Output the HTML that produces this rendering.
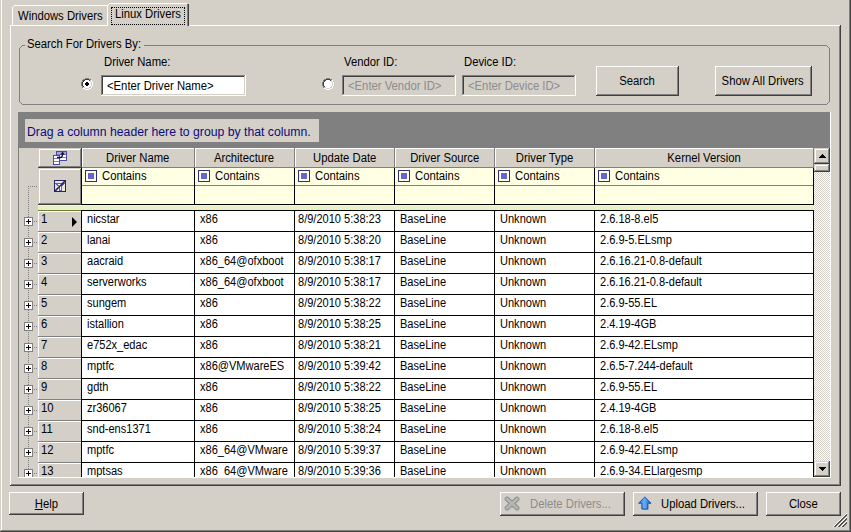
<!DOCTYPE html>
<html><head><meta charset="utf-8">
<style>
*{margin:0;padding:0;box-sizing:border-box}
html,body{width:851px;height:532px;overflow:hidden;background:#D4D0C8;font-family:"Liberation Sans",sans-serif;font-size:11px;color:#000;position:relative}
.a{position:absolute}
.t{position:absolute;white-space:nowrap;line-height:13px;font-size:12px}
.s{display:inline-block;transform:scaleX(0.94);transform-origin:0 0}
.s.c{transform-origin:50% 0}
.s.d{transform:scaleX(0.92)}
</style></head><body>
<div class="a" style="left:1px;top:0px;width:1px;height:531px;background:#fff;"></div><div class="a" style="left:849px;top:0px;width:1px;height:531px;background:#808080;"></div><div class="a" style="left:850px;top:0px;width:1px;height:532px;background:#404040;"></div><div class="a" style="left:1px;top:530px;width:849px;height:1px;background:#808080;"></div><div class="a" style="left:0px;top:531px;width:851px;height:1px;background:#404040;"></div><div class="a" style="left:12px;top:7px;width:1px;height:18px;background:#fff;"></div><div class="a" style="left:13px;top:6px;width:1px;height:1px;background:#fff;"></div><div class="a" style="left:14px;top:5px;width:93px;height:1px;background:#fff;"></div><div class="t" style="left:18px;top:10px;"><span class="s">Windows Drivers</span></div><div class="a" style="left:107px;top:5px;width:1px;height:21px;background:#fff;"></div><div class="a" style="left:108px;top:4px;width:1px;height:1px;background:#fff;"></div><div class="a" style="left:109px;top:3px;width:78px;height:1px;background:#fff;"></div><div class="a" style="left:187px;top:4px;width:1px;height:22px;background:#808080;"></div><div class="a" style="left:188px;top:4px;width:1px;height:22px;background:#404040;"></div><div class="t" style="left:115px;top:8px;"><span class="s">Linux Drivers</span></div><div class="a" style="left:111px;top:7px;width:74px;height:18px;border:1px dotted #000"></div><div class="a" style="left:10px;top:25px;width:97px;height:1px;background:#fff;"></div><div class="a" style="left:189px;top:25px;width:651px;height:1px;background:#fff;"></div><div class="a" style="left:10px;top:25px;width:1px;height:460px;background:#fff;"></div><div class="a" style="left:839px;top:26px;width:1px;height:459px;background:#808080;"></div><div class="a" style="left:840px;top:25px;width:1px;height:461px;background:#404040;"></div><div class="a" style="left:11px;top:484px;width:829px;height:1px;background:#808080;"></div><div class="a" style="left:10px;top:485px;width:831px;height:1px;background:#404040;"></div><svg class="a" style="left:0;top:0" width="851" height="532" shape-rendering="crispEdges"><g fill="#808080"><rect x="22" y="45" width="3" height="1"/><rect x="144" y="45" width="683" height="1"/><rect x="21" y="46" width="1" height="1"/><rect x="20" y="47" width="1" height="1"/><rect x="19" y="48" width="1" height="54"/><rect x="20" y="102" width="1" height="1"/><rect x="21" y="103" width="1" height="1"/><rect x="22" y="104" width="805" height="1"/><rect x="827" y="46" width="1" height="1"/><rect x="828" y="47" width="1" height="1"/><rect x="829" y="48" width="1" height="54"/><rect x="828" y="102" width="1" height="1"/><rect x="827" y="103" width="1" height="1"/></g></svg><div class="t" style="left:27px;top:38px;"><span class="s">Search For Drivers By:</span></div><div class="t" style="left:104px;top:56px;"><span class="s">Driver Name:</span></div><div class="t" style="left:344px;top:56px;"><span class="s">Vendor ID:</span></div><div class="t" style="left:464px;top:56px;"><span class="s">Device ID:</span></div><svg class="a" style="left:81px;top:78px" width="12" height="12" shape-rendering="crispEdges"><rect x="4" y="0" width="1" height="1" fill="#808080"/><rect x="5" y="0" width="1" height="1" fill="#808080"/><rect x="6" y="0" width="1" height="1" fill="#808080"/><rect x="7" y="0" width="1" height="1" fill="#808080"/><rect x="2" y="1" width="1" height="1" fill="#808080"/><rect x="3" y="1" width="1" height="1" fill="#808080"/><rect x="4" y="1" width="1" height="1" fill="#404040"/><rect x="5" y="1" width="1" height="1" fill="#404040"/><rect x="6" y="1" width="1" height="1" fill="#404040"/><rect x="7" y="1" width="1" height="1" fill="#404040"/><rect x="8" y="1" width="1" height="1" fill="#808080"/><rect x="9" y="1" width="1" height="1" fill="#808080"/><rect x="1" y="2" width="1" height="1" fill="#808080"/><rect x="2" y="2" width="1" height="1" fill="#404040"/><rect x="3" y="2" width="1" height="1" fill="#404040"/><rect x="4" y="2" width="1" height="1" fill="#fff"/><rect x="5" y="2" width="1" height="1" fill="#fff"/><rect x="6" y="2" width="1" height="1" fill="#fff"/><rect x="7" y="2" width="1" height="1" fill="#fff"/><rect x="8" y="2" width="1" height="1" fill="#404040"/><rect x="9" y="2" width="1" height="1" fill="#D4D0C8"/><rect x="10" y="2" width="1" height="1" fill="#fff"/><rect x="1" y="3" width="1" height="1" fill="#808080"/><rect x="2" y="3" width="1" height="1" fill="#404040"/><rect x="3" y="3" width="1" height="1" fill="#fff"/><rect x="4" y="3" width="1" height="1" fill="#fff"/><rect x="5" y="3" width="1" height="1" fill="#fff"/><rect x="6" y="3" width="1" height="1" fill="#fff"/><rect x="7" y="3" width="1" height="1" fill="#fff"/><rect x="8" y="3" width="1" height="1" fill="#fff"/><rect x="9" y="3" width="1" height="1" fill="#D4D0C8"/><rect x="10" y="3" width="1" height="1" fill="#fff"/><rect x="0" y="4" width="1" height="1" fill="#808080"/><rect x="1" y="4" width="1" height="1" fill="#404040"/><rect x="2" y="4" width="1" height="1" fill="#fff"/><rect x="3" y="4" width="1" height="1" fill="#fff"/><rect x="4" y="4" width="1" height="1" fill="#fff"/><rect x="5" y="4" width="1" height="1" fill="#000"/><rect x="6" y="4" width="1" height="1" fill="#000"/><rect x="7" y="4" width="1" height="1" fill="#fff"/><rect x="8" y="4" width="1" height="1" fill="#fff"/><rect x="9" y="4" width="1" height="1" fill="#fff"/><rect x="10" y="4" width="1" height="1" fill="#D4D0C8"/><rect x="11" y="4" width="1" height="1" fill="#fff"/><rect x="0" y="5" width="1" height="1" fill="#808080"/><rect x="1" y="5" width="1" height="1" fill="#404040"/><rect x="2" y="5" width="1" height="1" fill="#fff"/><rect x="3" y="5" width="1" height="1" fill="#fff"/><rect x="4" y="5" width="1" height="1" fill="#000"/><rect x="5" y="5" width="1" height="1" fill="#000"/><rect x="6" y="5" width="1" height="1" fill="#000"/><rect x="7" y="5" width="1" height="1" fill="#000"/><rect x="8" y="5" width="1" height="1" fill="#fff"/><rect x="9" y="5" width="1" height="1" fill="#fff"/><rect x="10" y="5" width="1" height="1" fill="#D4D0C8"/><rect x="11" y="5" width="1" height="1" fill="#fff"/><rect x="0" y="6" width="1" height="1" fill="#808080"/><rect x="1" y="6" width="1" height="1" fill="#404040"/><rect x="2" y="6" width="1" height="1" fill="#fff"/><rect x="3" y="6" width="1" height="1" fill="#fff"/><rect x="4" y="6" width="1" height="1" fill="#000"/><rect x="5" y="6" width="1" height="1" fill="#000"/><rect x="6" y="6" width="1" height="1" fill="#000"/><rect x="7" y="6" width="1" height="1" fill="#000"/><rect x="8" y="6" width="1" height="1" fill="#fff"/><rect x="9" y="6" width="1" height="1" fill="#fff"/><rect x="10" y="6" width="1" height="1" fill="#D4D0C8"/><rect x="11" y="6" width="1" height="1" fill="#fff"/><rect x="0" y="7" width="1" height="1" fill="#808080"/><rect x="1" y="7" width="1" height="1" fill="#404040"/><rect x="2" y="7" width="1" height="1" fill="#fff"/><rect x="3" y="7" width="1" height="1" fill="#fff"/><rect x="4" y="7" width="1" height="1" fill="#fff"/><rect x="5" y="7" width="1" height="1" fill="#000"/><rect x="6" y="7" width="1" height="1" fill="#000"/><rect x="7" y="7" width="1" height="1" fill="#fff"/><rect x="8" y="7" width="1" height="1" fill="#fff"/><rect x="9" y="7" width="1" height="1" fill="#fff"/><rect x="10" y="7" width="1" height="1" fill="#D4D0C8"/><rect x="11" y="7" width="1" height="1" fill="#fff"/><rect x="1" y="8" width="1" height="1" fill="#808080"/><rect x="2" y="8" width="1" height="1" fill="#404040"/><rect x="3" y="8" width="1" height="1" fill="#fff"/><rect x="4" y="8" width="1" height="1" fill="#fff"/><rect x="5" y="8" width="1" height="1" fill="#fff"/><rect x="6" y="8" width="1" height="1" fill="#fff"/><rect x="7" y="8" width="1" height="1" fill="#fff"/><rect x="8" y="8" width="1" height="1" fill="#fff"/><rect x="9" y="8" width="1" height="1" fill="#D4D0C8"/><rect x="10" y="8" width="1" height="1" fill="#fff"/><rect x="1" y="9" width="1" height="1" fill="#808080"/><rect x="2" y="9" width="1" height="1" fill="#D4D0C8"/><rect x="3" y="9" width="1" height="1" fill="#D4D0C8"/><rect x="4" y="9" width="1" height="1" fill="#fff"/><rect x="5" y="9" width="1" height="1" fill="#fff"/><rect x="6" y="9" width="1" height="1" fill="#fff"/><rect x="7" y="9" width="1" height="1" fill="#fff"/><rect x="8" y="9" width="1" height="1" fill="#D4D0C8"/><rect x="9" y="9" width="1" height="1" fill="#D4D0C8"/><rect x="10" y="9" width="1" height="1" fill="#fff"/><rect x="2" y="10" width="1" height="1" fill="#fff"/><rect x="3" y="10" width="1" height="1" fill="#fff"/><rect x="4" y="10" width="1" height="1" fill="#D4D0C8"/><rect x="5" y="10" width="1" height="1" fill="#D4D0C8"/><rect x="6" y="10" width="1" height="1" fill="#D4D0C8"/><rect x="7" y="10" width="1" height="1" fill="#D4D0C8"/><rect x="8" y="10" width="1" height="1" fill="#fff"/><rect x="9" y="10" width="1" height="1" fill="#fff"/><rect x="4" y="11" width="1" height="1" fill="#fff"/><rect x="5" y="11" width="1" height="1" fill="#fff"/><rect x="6" y="11" width="1" height="1" fill="#fff"/><rect x="7" y="11" width="1" height="1" fill="#fff"/></svg><svg class="a" style="left:322px;top:78px" width="12" height="12" shape-rendering="crispEdges"><rect x="4" y="0" width="1" height="1" fill="#808080"/><rect x="5" y="0" width="1" height="1" fill="#808080"/><rect x="6" y="0" width="1" height="1" fill="#808080"/><rect x="7" y="0" width="1" height="1" fill="#808080"/><rect x="2" y="1" width="1" height="1" fill="#808080"/><rect x="3" y="1" width="1" height="1" fill="#808080"/><rect x="4" y="1" width="1" height="1" fill="#404040"/><rect x="5" y="1" width="1" height="1" fill="#404040"/><rect x="6" y="1" width="1" height="1" fill="#404040"/><rect x="7" y="1" width="1" height="1" fill="#404040"/><rect x="8" y="1" width="1" height="1" fill="#808080"/><rect x="9" y="1" width="1" height="1" fill="#808080"/><rect x="1" y="2" width="1" height="1" fill="#808080"/><rect x="2" y="2" width="1" height="1" fill="#404040"/><rect x="3" y="2" width="1" height="1" fill="#404040"/><rect x="4" y="2" width="1" height="1" fill="#fff"/><rect x="5" y="2" width="1" height="1" fill="#fff"/><rect x="6" y="2" width="1" height="1" fill="#fff"/><rect x="7" y="2" width="1" height="1" fill="#fff"/><rect x="8" y="2" width="1" height="1" fill="#404040"/><rect x="9" y="2" width="1" height="1" fill="#D4D0C8"/><rect x="10" y="2" width="1" height="1" fill="#fff"/><rect x="1" y="3" width="1" height="1" fill="#808080"/><rect x="2" y="3" width="1" height="1" fill="#404040"/><rect x="3" y="3" width="1" height="1" fill="#fff"/><rect x="4" y="3" width="1" height="1" fill="#fff"/><rect x="5" y="3" width="1" height="1" fill="#fff"/><rect x="6" y="3" width="1" height="1" fill="#fff"/><rect x="7" y="3" width="1" height="1" fill="#fff"/><rect x="8" y="3" width="1" height="1" fill="#fff"/><rect x="9" y="3" width="1" height="1" fill="#D4D0C8"/><rect x="10" y="3" width="1" height="1" fill="#fff"/><rect x="0" y="4" width="1" height="1" fill="#808080"/><rect x="1" y="4" width="1" height="1" fill="#404040"/><rect x="2" y="4" width="1" height="1" fill="#fff"/><rect x="3" y="4" width="1" height="1" fill="#fff"/><rect x="4" y="4" width="1" height="1" fill="#fff"/><rect x="5" y="4" width="1" height="1" fill="#fff"/><rect x="6" y="4" width="1" height="1" fill="#fff"/><rect x="7" y="4" width="1" height="1" fill="#fff"/><rect x="8" y="4" width="1" height="1" fill="#fff"/><rect x="9" y="4" width="1" height="1" fill="#fff"/><rect x="10" y="4" width="1" height="1" fill="#D4D0C8"/><rect x="11" y="4" width="1" height="1" fill="#fff"/><rect x="0" y="5" width="1" height="1" fill="#808080"/><rect x="1" y="5" width="1" height="1" fill="#404040"/><rect x="2" y="5" width="1" height="1" fill="#fff"/><rect x="3" y="5" width="1" height="1" fill="#fff"/><rect x="4" y="5" width="1" height="1" fill="#fff"/><rect x="5" y="5" width="1" height="1" fill="#fff"/><rect x="6" y="5" width="1" height="1" fill="#fff"/><rect x="7" y="5" width="1" height="1" fill="#fff"/><rect x="8" y="5" width="1" height="1" fill="#fff"/><rect x="9" y="5" width="1" height="1" fill="#fff"/><rect x="10" y="5" width="1" height="1" fill="#D4D0C8"/><rect x="11" y="5" width="1" height="1" fill="#fff"/><rect x="0" y="6" width="1" height="1" fill="#808080"/><rect x="1" y="6" width="1" height="1" fill="#404040"/><rect x="2" y="6" width="1" height="1" fill="#fff"/><rect x="3" y="6" width="1" height="1" fill="#fff"/><rect x="4" y="6" width="1" height="1" fill="#fff"/><rect x="5" y="6" width="1" height="1" fill="#fff"/><rect x="6" y="6" width="1" height="1" fill="#fff"/><rect x="7" y="6" width="1" height="1" fill="#fff"/><rect x="8" y="6" width="1" height="1" fill="#fff"/><rect x="9" y="6" width="1" height="1" fill="#fff"/><rect x="10" y="6" width="1" height="1" fill="#D4D0C8"/><rect x="11" y="6" width="1" height="1" fill="#fff"/><rect x="0" y="7" width="1" height="1" fill="#808080"/><rect x="1" y="7" width="1" height="1" fill="#404040"/><rect x="2" y="7" width="1" height="1" fill="#fff"/><rect x="3" y="7" width="1" height="1" fill="#fff"/><rect x="4" y="7" width="1" height="1" fill="#fff"/><rect x="5" y="7" width="1" height="1" fill="#fff"/><rect x="6" y="7" width="1" height="1" fill="#fff"/><rect x="7" y="7" width="1" height="1" fill="#fff"/><rect x="8" y="7" width="1" height="1" fill="#fff"/><rect x="9" y="7" width="1" height="1" fill="#fff"/><rect x="10" y="7" width="1" height="1" fill="#D4D0C8"/><rect x="11" y="7" width="1" height="1" fill="#fff"/><rect x="1" y="8" width="1" height="1" fill="#808080"/><rect x="2" y="8" width="1" height="1" fill="#404040"/><rect x="3" y="8" width="1" height="1" fill="#fff"/><rect x="4" y="8" width="1" height="1" fill="#fff"/><rect x="5" y="8" width="1" height="1" fill="#fff"/><rect x="6" y="8" width="1" height="1" fill="#fff"/><rect x="7" y="8" width="1" height="1" fill="#fff"/><rect x="8" y="8" width="1" height="1" fill="#fff"/><rect x="9" y="8" width="1" height="1" fill="#D4D0C8"/><rect x="10" y="8" width="1" height="1" fill="#fff"/><rect x="1" y="9" width="1" height="1" fill="#808080"/><rect x="2" y="9" width="1" height="1" fill="#D4D0C8"/><rect x="3" y="9" width="1" height="1" fill="#D4D0C8"/><rect x="4" y="9" width="1" height="1" fill="#fff"/><rect x="5" y="9" width="1" height="1" fill="#fff"/><rect x="6" y="9" width="1" height="1" fill="#fff"/><rect x="7" y="9" width="1" height="1" fill="#fff"/><rect x="8" y="9" width="1" height="1" fill="#D4D0C8"/><rect x="9" y="9" width="1" height="1" fill="#D4D0C8"/><rect x="10" y="9" width="1" height="1" fill="#fff"/><rect x="2" y="10" width="1" height="1" fill="#fff"/><rect x="3" y="10" width="1" height="1" fill="#fff"/><rect x="4" y="10" width="1" height="1" fill="#D4D0C8"/><rect x="5" y="10" width="1" height="1" fill="#D4D0C8"/><rect x="6" y="10" width="1" height="1" fill="#D4D0C8"/><rect x="7" y="10" width="1" height="1" fill="#D4D0C8"/><rect x="8" y="10" width="1" height="1" fill="#fff"/><rect x="9" y="10" width="1" height="1" fill="#fff"/><rect x="4" y="11" width="1" height="1" fill="#fff"/><rect x="5" y="11" width="1" height="1" fill="#fff"/><rect x="6" y="11" width="1" height="1" fill="#fff"/><rect x="7" y="11" width="1" height="1" fill="#fff"/></svg><div class="a" style="left:101px;top:75px;width:145px;height:21px;background:#fff;"></div><div class="a" style="left:101px;top:75px;width:144px;height:1px;background:#808080;"></div><div class="a" style="left:101px;top:75px;width:1px;height:20px;background:#808080;"></div><div class="a" style="left:102px;top:76px;width:142px;height:1px;background:#404040;"></div><div class="a" style="left:102px;top:76px;width:1px;height:18px;background:#404040;"></div><div class="a" style="left:101px;top:95px;width:145px;height:1px;background:#fff;"></div><div class="a" style="left:245px;top:75px;width:1px;height:21px;background:#fff;"></div><div class="a" style="left:102px;top:94px;width:143px;height:1px;background:#D4D0C8;"></div><div class="a" style="left:244px;top:76px;width:1px;height:19px;background:#D4D0C8;"></div><div class="t" style="left:107px;top:80px;"><span class="s">&lt;Enter Driver Name&gt;</span></div><div class="a" style="left:342px;top:75px;width:114px;height:21px;background:#D4D0C8;"></div><div class="a" style="left:342px;top:75px;width:113px;height:1px;background:#808080;"></div><div class="a" style="left:342px;top:75px;width:1px;height:20px;background:#808080;"></div><div class="a" style="left:343px;top:76px;width:111px;height:1px;background:#404040;"></div><div class="a" style="left:343px;top:76px;width:1px;height:18px;background:#404040;"></div><div class="a" style="left:342px;top:95px;width:114px;height:1px;background:#fff;"></div><div class="a" style="left:455px;top:75px;width:1px;height:21px;background:#fff;"></div><div class="a" style="left:343px;top:94px;width:112px;height:1px;background:#D4D0C8;"></div><div class="a" style="left:454px;top:76px;width:1px;height:19px;background:#D4D0C8;"></div><div class="t" style="left:348px;top:80px;color:#8c8c8c"><span class="s">&lt;Enter Vendor ID&gt;</span></div><div class="a" style="left:462px;top:75px;width:114px;height:21px;background:#D4D0C8;"></div><div class="a" style="left:462px;top:75px;width:113px;height:1px;background:#808080;"></div><div class="a" style="left:462px;top:75px;width:1px;height:20px;background:#808080;"></div><div class="a" style="left:463px;top:76px;width:111px;height:1px;background:#404040;"></div><div class="a" style="left:463px;top:76px;width:1px;height:18px;background:#404040;"></div><div class="a" style="left:462px;top:95px;width:114px;height:1px;background:#fff;"></div><div class="a" style="left:575px;top:75px;width:1px;height:21px;background:#fff;"></div><div class="a" style="left:463px;top:94px;width:112px;height:1px;background:#D4D0C8;"></div><div class="a" style="left:574px;top:76px;width:1px;height:19px;background:#D4D0C8;"></div><div class="t" style="left:468px;top:80px;color:#8c8c8c"><span class="s">&lt;Enter Device ID&gt;</span></div><div class="a" style="left:596px;top:66px;width:83px;height:30px;background:#D4D0C8;"></div><div class="a" style="left:596px;top:66px;width:82px;height:1px;background:#fff;"></div><div class="a" style="left:596px;top:66px;width:1px;height:29px;background:#fff;"></div><div class="a" style="left:596px;top:95px;width:83px;height:1px;background:#404040;"></div><div class="a" style="left:678px;top:66px;width:1px;height:30px;background:#404040;"></div><div class="a" style="left:597px;top:94px;width:81px;height:1px;background:#808080;"></div><div class="a" style="left:677px;top:67px;width:1px;height:28px;background:#808080;"></div><div class="t" style="left:596px;top:75px;width:82px;text-align:center;"><span class="s c">Search</span></div><div class="a" style="left:715px;top:66px;width:97px;height:30px;background:#D4D0C8;"></div><div class="a" style="left:715px;top:66px;width:96px;height:1px;background:#fff;"></div><div class="a" style="left:715px;top:66px;width:1px;height:29px;background:#fff;"></div><div class="a" style="left:715px;top:95px;width:97px;height:1px;background:#404040;"></div><div class="a" style="left:811px;top:66px;width:1px;height:30px;background:#404040;"></div><div class="a" style="left:716px;top:94px;width:95px;height:1px;background:#808080;"></div><div class="a" style="left:810px;top:67px;width:1px;height:28px;background:#808080;"></div><div class="t" style="left:715px;top:75px;width:96px;text-align:center;"><span class="s c">Show All Drivers</span></div><div class="a" style="left:18px;top:112px;width:812px;height:36px;background:#808080;"></div><div class="a" style="left:25px;top:119px;width:294px;height:23px;background:#D4D0C8;"></div><div class="t" style="left:27px;top:125px;font-size:12px;line-height:14px;color:#0a0a80"><span style="display:inline-block;transform:scaleX(1.02);transform-origin:0 0">Drag a column header here to group by that column.</span></div><div class="a" style="left:830px;top:112px;width:1px;height:366px;background:#fff;"></div><div class="a" style="left:18px;top:148px;width:1px;height:329px;background:#808080;"></div><div class="a" style="left:18px;top:477px;width:813px;height:1px;background:#fff;"></div><div class="a" style="left:38px;top:148px;width:44px;height:20px;background:#D4D0C8;"></div><div class="a" style="left:39px;top:149px;width:42px;height:1px;background:#fff;"></div><div class="a" style="left:39px;top:149px;width:1px;height:18px;background:#fff;"></div><div class="a" style="left:38px;top:167px;width:44px;height:1px;background:#404040;"></div><div class="a" style="left:81px;top:148px;width:1px;height:20px;background:#404040;"></div><div class="a" style="left:39px;top:166px;width:42px;height:1px;background:#808080;"></div><div class="a" style="left:80px;top:149px;width:1px;height:18px;background:#808080;"></div><svg class="a" style="left:0;top:0" width="851" height="532" shape-rendering="crispEdges"><rect x="56" y="151" width="11" height="10" fill="#4a4aa0"/><rect x="57" y="152" width="9" height="8" fill="#fff"/><rect x="57" y="152" width="9" height="2" fill="#a4a4e4"/><rect x="57" y="154" width="9" height="1" fill="#7c7cc8"/><rect x="57" y="157" width="9" height="1" fill="#7c7cc8"/><rect x="53" y="155" width="7" height="10" fill="#4a4aa0"/><rect x="54" y="156" width="5" height="8" fill="#fff"/><rect x="54" y="158" width="5" height="1" fill="#7c7cc8"/><rect x="54" y="161" width="5" height="1" fill="#7c7cc8"/><path d="M57,157.5 L60.5,157.5 Q62.5,157.5 62.5,154.5" fill="none" stroke="#141440" stroke-width="1.3" shape-rendering="auto"/><path d="M60.3,154.8 L62.6,151.6 L64.8,154.8 Z" fill="#141440" shape-rendering="auto"/></svg><div class="a" style="left:82px;top:148px;width:113px;height:20px;background:#D4D0C8;"></div><div class="a" style="left:82px;top:148px;width:112px;height:1px;background:#fff;"></div><div class="a" style="left:82px;top:148px;width:1px;height:19px;background:#fff;"></div><div class="a" style="left:194px;top:148px;width:1px;height:20px;background:#808080;"></div><div class="a" style="left:82px;top:167px;width:113px;height:1px;background:#808080;"></div><div class="t" style="left:82px;top:152px;width:112px;text-align:center;"><span class="s c">Driver Name</span></div><div class="a" style="left:195px;top:148px;width:100px;height:20px;background:#D4D0C8;"></div><div class="a" style="left:195px;top:148px;width:99px;height:1px;background:#fff;"></div><div class="a" style="left:195px;top:148px;width:1px;height:19px;background:#fff;"></div><div class="a" style="left:294px;top:148px;width:1px;height:20px;background:#808080;"></div><div class="a" style="left:195px;top:167px;width:100px;height:1px;background:#808080;"></div><div class="t" style="left:195px;top:152px;width:99px;text-align:center;"><span class="s c">Architecture</span></div><div class="a" style="left:295px;top:148px;width:100px;height:20px;background:#D4D0C8;"></div><div class="a" style="left:295px;top:148px;width:99px;height:1px;background:#fff;"></div><div class="a" style="left:295px;top:148px;width:1px;height:19px;background:#fff;"></div><div class="a" style="left:394px;top:148px;width:1px;height:20px;background:#808080;"></div><div class="a" style="left:295px;top:167px;width:100px;height:1px;background:#808080;"></div><div class="t" style="left:295px;top:152px;width:99px;text-align:center;"><span class="s c">Update Date</span></div><div class="a" style="left:395px;top:148px;width:100px;height:20px;background:#D4D0C8;"></div><div class="a" style="left:395px;top:148px;width:99px;height:1px;background:#fff;"></div><div class="a" style="left:395px;top:148px;width:1px;height:19px;background:#fff;"></div><div class="a" style="left:494px;top:148px;width:1px;height:20px;background:#808080;"></div><div class="a" style="left:395px;top:167px;width:100px;height:1px;background:#808080;"></div><div class="t" style="left:395px;top:152px;width:99px;text-align:center;"><span class="s c">Driver Source</span></div><div class="a" style="left:495px;top:148px;width:100px;height:20px;background:#D4D0C8;"></div><div class="a" style="left:495px;top:148px;width:99px;height:1px;background:#fff;"></div><div class="a" style="left:495px;top:148px;width:1px;height:19px;background:#fff;"></div><div class="a" style="left:594px;top:148px;width:1px;height:20px;background:#808080;"></div><div class="a" style="left:495px;top:167px;width:100px;height:1px;background:#808080;"></div><div class="t" style="left:495px;top:152px;width:99px;text-align:center;"><span class="s c">Driver Type</span></div><div class="a" style="left:595px;top:148px;width:219px;height:20px;background:#D4D0C8;"></div><div class="a" style="left:595px;top:148px;width:218px;height:1px;background:#fff;"></div><div class="a" style="left:595px;top:148px;width:1px;height:19px;background:#fff;"></div><div class="a" style="left:813px;top:148px;width:1px;height:20px;background:#808080;"></div><div class="a" style="left:595px;top:167px;width:219px;height:1px;background:#808080;"></div><div class="t" style="left:595px;top:152px;width:218px;text-align:center;"><span class="s c">Kernel Version</span></div><div class="a" style="left:38px;top:168px;width:44px;height:37px;background:#D4D0C8;"></div><div class="a" style="left:39px;top:169px;width:42px;height:1px;background:#fff;"></div><div class="a" style="left:39px;top:169px;width:1px;height:35px;background:#fff;"></div><div class="a" style="left:38px;top:204px;width:44px;height:1px;background:#404040;"></div><div class="a" style="left:81px;top:168px;width:1px;height:37px;background:#404040;"></div><div class="a" style="left:39px;top:203px;width:42px;height:1px;background:#808080;"></div><div class="a" style="left:80px;top:169px;width:1px;height:35px;background:#808080;"></div><svg class="a" style="left:0;top:0" width="851" height="532" shape-rendering="crispEdges"><rect x="54" y="180" width="12" height="12" fill="#22226c"/><rect x="55" y="181" width="10" height="10" fill="#ece8d4"/><rect x="55" y="183" width="10" height="1" fill="#5c5cd4"/><rect x="56" y="184" width="8" height="1" fill="#5c5cd4"/><rect x="58" y="184" width="3" height="1" fill="#fff"/><rect x="57" y="185" width="6" height="1" fill="#5c5cd4"/><rect x="59" y="185" width="2" height="1" fill="#fff"/><rect x="59" y="186" width="3" height="5" fill="#5c5cd4"/><rect x="60" y="186" width="1" height="4" fill="#fff"/><path d="M54.8,191.2 L65.2,180.8" stroke="#22226c" stroke-width="1.6" shape-rendering="auto"/></svg><div class="a" style="left:82px;top:168px;width:732px;height:37px;background:#FFFFE3;"></div><div class="a" style="left:81px;top:168px;width:1px;height:37px;background:#000;"></div><div class="a" style="left:82px;top:185px;width:112px;height:1px;background:#808080;"></div><div class="a" style="left:85px;top:170px;width:12px;height:12px;background:#2e2e7e;"></div><div class="a" style="left:86px;top:171px;width:10px;height:10px;background:#FFFFE3;"></div><div class="a" style="left:88px;top:173px;width:6px;height:6px;background:#6464d6;"></div><div class="t" style="left:102px;top:170px;"><span class="s">Contains</span></div><div class="a" style="left:194px;top:168px;width:1px;height:37px;background:#000;"></div><div class="a" style="left:195px;top:185px;width:99px;height:1px;background:#808080;"></div><div class="a" style="left:198px;top:170px;width:12px;height:12px;background:#2e2e7e;"></div><div class="a" style="left:199px;top:171px;width:10px;height:10px;background:#FFFFE3;"></div><div class="a" style="left:201px;top:173px;width:6px;height:6px;background:#6464d6;"></div><div class="t" style="left:215px;top:170px;"><span class="s">Contains</span></div><div class="a" style="left:294px;top:168px;width:1px;height:37px;background:#000;"></div><div class="a" style="left:295px;top:185px;width:99px;height:1px;background:#808080;"></div><div class="a" style="left:298px;top:170px;width:12px;height:12px;background:#2e2e7e;"></div><div class="a" style="left:299px;top:171px;width:10px;height:10px;background:#FFFFE3;"></div><div class="a" style="left:301px;top:173px;width:6px;height:6px;background:#6464d6;"></div><div class="t" style="left:315px;top:170px;"><span class="s">Contains</span></div><div class="a" style="left:394px;top:168px;width:1px;height:37px;background:#000;"></div><div class="a" style="left:395px;top:185px;width:99px;height:1px;background:#808080;"></div><div class="a" style="left:398px;top:170px;width:12px;height:12px;background:#2e2e7e;"></div><div class="a" style="left:399px;top:171px;width:10px;height:10px;background:#FFFFE3;"></div><div class="a" style="left:401px;top:173px;width:6px;height:6px;background:#6464d6;"></div><div class="t" style="left:415px;top:170px;"><span class="s">Contains</span></div><div class="a" style="left:494px;top:168px;width:1px;height:37px;background:#000;"></div><div class="a" style="left:495px;top:185px;width:99px;height:1px;background:#808080;"></div><div class="a" style="left:498px;top:170px;width:12px;height:12px;background:#2e2e7e;"></div><div class="a" style="left:499px;top:171px;width:10px;height:10px;background:#FFFFE3;"></div><div class="a" style="left:501px;top:173px;width:6px;height:6px;background:#6464d6;"></div><div class="t" style="left:515px;top:170px;"><span class="s">Contains</span></div><div class="a" style="left:594px;top:168px;width:1px;height:37px;background:#000;"></div><div class="a" style="left:595px;top:185px;width:218px;height:1px;background:#808080;"></div><div class="a" style="left:598px;top:170px;width:12px;height:12px;background:#2e2e7e;"></div><div class="a" style="left:599px;top:171px;width:10px;height:10px;background:#FFFFE3;"></div><div class="a" style="left:601px;top:173px;width:6px;height:6px;background:#6464d6;"></div><div class="t" style="left:615px;top:170px;"><span class="s">Contains</span></div><div class="a" style="left:813px;top:168px;width:1px;height:37px;background:#000;"></div><div class="a" style="left:81px;top:204px;width:733px;height:1px;background:#000;"></div><div class="a" style="left:38px;top:205px;width:776px;height:5px;background:#E8F0C8;"></div><div class="a" style="left:38px;top:205px;width:776px;height:1px;background:#F2F6E2;"></div><div class="a" style="left:38px;top:210px;width:44px;height:1px;background:#6f8030;"></div><svg class="a" style="left:0;top:0" width="851" height="532" shape-rendering="crispEdges"><g fill="#808080"><rect x="28" y="186" width="1" height="1"/><rect x="30" y="186" width="1" height="1"/><rect x="32" y="186" width="1" height="1"/><rect x="34" y="186" width="1" height="1"/><rect x="36" y="186" width="1" height="1"/><rect x="28" y="188" width="1" height="1"/><rect x="28" y="190" width="1" height="1"/><rect x="28" y="192" width="1" height="1"/><rect x="28" y="194" width="1" height="1"/><rect x="28" y="196" width="1" height="1"/><rect x="28" y="198" width="1" height="1"/><rect x="28" y="200" width="1" height="1"/><rect x="28" y="202" width="1" height="1"/><rect x="28" y="204" width="1" height="1"/><rect x="28" y="206" width="1" height="1"/><rect x="28" y="208" width="1" height="1"/><rect x="28" y="210" width="1" height="1"/><rect x="28" y="212" width="1" height="1"/><rect x="28" y="214" width="1" height="1"/><rect x="28" y="216" width="1" height="1"/><rect x="28" y="218" width="1" height="1"/><rect x="28" y="220" width="1" height="1"/><rect x="28" y="222" width="1" height="1"/><rect x="28" y="224" width="1" height="1"/><rect x="28" y="226" width="1" height="1"/><rect x="28" y="228" width="1" height="1"/><rect x="28" y="230" width="1" height="1"/><rect x="28" y="232" width="1" height="1"/><rect x="28" y="234" width="1" height="1"/><rect x="28" y="236" width="1" height="1"/><rect x="28" y="238" width="1" height="1"/><rect x="28" y="240" width="1" height="1"/><rect x="28" y="242" width="1" height="1"/><rect x="28" y="244" width="1" height="1"/><rect x="28" y="246" width="1" height="1"/><rect x="28" y="248" width="1" height="1"/><rect x="28" y="250" width="1" height="1"/><rect x="28" y="252" width="1" height="1"/><rect x="28" y="254" width="1" height="1"/><rect x="28" y="256" width="1" height="1"/><rect x="28" y="258" width="1" height="1"/><rect x="28" y="260" width="1" height="1"/><rect x="28" y="262" width="1" height="1"/><rect x="28" y="264" width="1" height="1"/><rect x="28" y="266" width="1" height="1"/><rect x="28" y="268" width="1" height="1"/><rect x="28" y="270" width="1" height="1"/><rect x="28" y="272" width="1" height="1"/><rect x="28" y="274" width="1" height="1"/><rect x="28" y="276" width="1" height="1"/><rect x="28" y="278" width="1" height="1"/><rect x="28" y="280" width="1" height="1"/><rect x="28" y="282" width="1" height="1"/><rect x="28" y="284" width="1" height="1"/><rect x="28" y="286" width="1" height="1"/><rect x="28" y="288" width="1" height="1"/><rect x="28" y="290" width="1" height="1"/><rect x="28" y="292" width="1" height="1"/><rect x="28" y="294" width="1" height="1"/><rect x="28" y="296" width="1" height="1"/><rect x="28" y="298" width="1" height="1"/><rect x="28" y="300" width="1" height="1"/><rect x="28" y="302" width="1" height="1"/><rect x="28" y="304" width="1" height="1"/><rect x="28" y="306" width="1" height="1"/><rect x="28" y="308" width="1" height="1"/><rect x="28" y="310" width="1" height="1"/><rect x="28" y="312" width="1" height="1"/><rect x="28" y="314" width="1" height="1"/><rect x="28" y="316" width="1" height="1"/><rect x="28" y="318" width="1" height="1"/><rect x="28" y="320" width="1" height="1"/><rect x="28" y="322" width="1" height="1"/><rect x="28" y="324" width="1" height="1"/><rect x="28" y="326" width="1" height="1"/><rect x="28" y="328" width="1" height="1"/><rect x="28" y="330" width="1" height="1"/><rect x="28" y="332" width="1" height="1"/><rect x="28" y="334" width="1" height="1"/><rect x="28" y="336" width="1" height="1"/><rect x="28" y="338" width="1" height="1"/><rect x="28" y="340" width="1" height="1"/><rect x="28" y="342" width="1" height="1"/><rect x="28" y="344" width="1" height="1"/><rect x="28" y="346" width="1" height="1"/><rect x="28" y="348" width="1" height="1"/><rect x="28" y="350" width="1" height="1"/><rect x="28" y="352" width="1" height="1"/><rect x="28" y="354" width="1" height="1"/><rect x="28" y="356" width="1" height="1"/><rect x="28" y="358" width="1" height="1"/><rect x="28" y="360" width="1" height="1"/><rect x="28" y="362" width="1" height="1"/><rect x="28" y="364" width="1" height="1"/><rect x="28" y="366" width="1" height="1"/><rect x="28" y="368" width="1" height="1"/><rect x="28" y="370" width="1" height="1"/><rect x="28" y="372" width="1" height="1"/><rect x="28" y="374" width="1" height="1"/><rect x="28" y="376" width="1" height="1"/><rect x="28" y="378" width="1" height="1"/><rect x="28" y="380" width="1" height="1"/><rect x="28" y="382" width="1" height="1"/><rect x="28" y="384" width="1" height="1"/><rect x="28" y="386" width="1" height="1"/><rect x="28" y="388" width="1" height="1"/><rect x="28" y="390" width="1" height="1"/><rect x="28" y="392" width="1" height="1"/><rect x="28" y="394" width="1" height="1"/><rect x="28" y="396" width="1" height="1"/><rect x="28" y="398" width="1" height="1"/><rect x="28" y="400" width="1" height="1"/><rect x="28" y="402" width="1" height="1"/><rect x="28" y="404" width="1" height="1"/><rect x="28" y="406" width="1" height="1"/><rect x="28" y="408" width="1" height="1"/><rect x="28" y="410" width="1" height="1"/><rect x="28" y="412" width="1" height="1"/><rect x="28" y="414" width="1" height="1"/><rect x="28" y="416" width="1" height="1"/><rect x="28" y="418" width="1" height="1"/><rect x="28" y="420" width="1" height="1"/><rect x="28" y="422" width="1" height="1"/><rect x="28" y="424" width="1" height="1"/><rect x="28" y="426" width="1" height="1"/><rect x="28" y="428" width="1" height="1"/><rect x="28" y="430" width="1" height="1"/><rect x="28" y="432" width="1" height="1"/><rect x="28" y="434" width="1" height="1"/><rect x="28" y="436" width="1" height="1"/><rect x="28" y="438" width="1" height="1"/><rect x="28" y="440" width="1" height="1"/><rect x="28" y="442" width="1" height="1"/><rect x="28" y="444" width="1" height="1"/><rect x="28" y="446" width="1" height="1"/><rect x="28" y="448" width="1" height="1"/><rect x="28" y="450" width="1" height="1"/><rect x="28" y="452" width="1" height="1"/><rect x="28" y="454" width="1" height="1"/><rect x="28" y="456" width="1" height="1"/><rect x="28" y="458" width="1" height="1"/><rect x="28" y="460" width="1" height="1"/><rect x="28" y="462" width="1" height="1"/><rect x="28" y="464" width="1" height="1"/><rect x="28" y="466" width="1" height="1"/><rect x="28" y="468" width="1" height="1"/><rect x="28" y="470" width="1" height="1"/><rect x="28" y="472" width="1" height="1"/><rect x="28" y="474" width="1" height="1"/><rect x="28" y="476" width="1" height="1"/></g></svg><div class="a" style="left:0;top:0;width:851px;height:477px;overflow:hidden"><div class="a" style="left:38px;top:211px;width:43px;height:20px;background:#D4D0C8;"></div><div class="a" style="left:38px;top:211px;width:43px;height:1px;background:#fff;"></div><div class="a" style="left:38px;top:211px;width:1px;height:20px;background:#fff;"></div><div class="a" style="left:38px;top:231px;width:43px;height:1px;background:#808080;"></div><div class="t" style="left:41px;top:213px;"><span class="s">1</span></div><svg class="a" style="left:72px;top:217px" width="6" height="10"><path d="M0,0 L5,5 L0,10 Z" fill="#000"/></svg><div class="a" style="left:82px;top:211px;width:731px;height:20px;background:#fff;"></div><div class="a" style="left:81px;top:210px;width:733px;height:1px;background:#000;"></div><div class="a" style="left:81px;top:210px;width:1px;height:22px;background:#000;"></div><div class="a" style="left:194px;top:210px;width:1px;height:22px;background:#000;"></div><div class="a" style="left:294px;top:210px;width:1px;height:22px;background:#000;"></div><div class="a" style="left:394px;top:210px;width:1px;height:22px;background:#000;"></div><div class="a" style="left:494px;top:210px;width:1px;height:22px;background:#000;"></div><div class="a" style="left:594px;top:210px;width:1px;height:22px;background:#000;"></div><div class="a" style="left:813px;top:210px;width:1px;height:22px;background:#000;"></div><div class="t" style="left:86.5px;top:213px;width:106px;overflow:hidden"><span class="s d">nicstar</span></div><div class="t" style="left:199.5px;top:213px;width:93px;overflow:hidden"><span class="s d">x86</span></div><div class="t" style="left:298px;top:213px;width:93px;overflow:hidden"><span class="s d">8/9/2010 5:38:23</span></div><div class="t" style="left:399.5px;top:213px;width:93px;overflow:hidden"><span class="s d">BaseLine</span></div><div class="t" style="left:499.5px;top:213px;width:93px;overflow:hidden"><span class="s d">Unknown</span></div><div class="t" style="left:599.5px;top:213px;width:212px;overflow:hidden"><span class="s d">2.6.18-8.el5</span></div><div class="a" style="left:24px;top:217px;width:9px;height:9px;background:#808080;"></div><div class="a" style="left:25px;top:218px;width:7px;height:7px;background:#fff;"></div><div class="a" style="left:26px;top:221px;width:5px;height:1px;background:#000;"></div><div class="a" style="left:28px;top:219px;width:1px;height:5px;background:#000;"></div><div class="a" style="left:34px;top:221px;width:1px;height:1px;background:#808080;"></div><div class="a" style="left:36px;top:221px;width:1px;height:1px;background:#808080;"></div><div class="a" style="left:38px;top:232px;width:43px;height:20px;background:#D4D0C8;"></div><div class="a" style="left:38px;top:232px;width:43px;height:1px;background:#fff;"></div><div class="a" style="left:38px;top:232px;width:1px;height:20px;background:#fff;"></div><div class="a" style="left:38px;top:252px;width:43px;height:1px;background:#808080;"></div><div class="t" style="left:41px;top:234px;"><span class="s">2</span></div><div class="a" style="left:82px;top:232px;width:731px;height:20px;background:#fff;"></div><div class="a" style="left:81px;top:231px;width:733px;height:1px;background:#000;"></div><div class="a" style="left:81px;top:231px;width:1px;height:22px;background:#000;"></div><div class="a" style="left:194px;top:231px;width:1px;height:22px;background:#000;"></div><div class="a" style="left:294px;top:231px;width:1px;height:22px;background:#000;"></div><div class="a" style="left:394px;top:231px;width:1px;height:22px;background:#000;"></div><div class="a" style="left:494px;top:231px;width:1px;height:22px;background:#000;"></div><div class="a" style="left:594px;top:231px;width:1px;height:22px;background:#000;"></div><div class="a" style="left:813px;top:231px;width:1px;height:22px;background:#000;"></div><div class="t" style="left:86.5px;top:234px;width:106px;overflow:hidden"><span class="s d">lanai</span></div><div class="t" style="left:199.5px;top:234px;width:93px;overflow:hidden"><span class="s d">x86</span></div><div class="t" style="left:298px;top:234px;width:93px;overflow:hidden"><span class="s d">8/9/2010 5:38:20</span></div><div class="t" style="left:399.5px;top:234px;width:93px;overflow:hidden"><span class="s d">BaseLine</span></div><div class="t" style="left:499.5px;top:234px;width:93px;overflow:hidden"><span class="s d">Unknown</span></div><div class="t" style="left:599.5px;top:234px;width:212px;overflow:hidden"><span class="s d">2.6.9-5.ELsmp</span></div><div class="a" style="left:24px;top:238px;width:9px;height:9px;background:#808080;"></div><div class="a" style="left:25px;top:239px;width:7px;height:7px;background:#fff;"></div><div class="a" style="left:26px;top:242px;width:5px;height:1px;background:#000;"></div><div class="a" style="left:28px;top:240px;width:1px;height:5px;background:#000;"></div><div class="a" style="left:34px;top:242px;width:1px;height:1px;background:#808080;"></div><div class="a" style="left:36px;top:242px;width:1px;height:1px;background:#808080;"></div><div class="a" style="left:38px;top:253px;width:43px;height:20px;background:#D4D0C8;"></div><div class="a" style="left:38px;top:253px;width:43px;height:1px;background:#fff;"></div><div class="a" style="left:38px;top:253px;width:1px;height:20px;background:#fff;"></div><div class="a" style="left:38px;top:273px;width:43px;height:1px;background:#808080;"></div><div class="t" style="left:41px;top:255px;"><span class="s">3</span></div><div class="a" style="left:82px;top:253px;width:731px;height:20px;background:#fff;"></div><div class="a" style="left:81px;top:252px;width:733px;height:1px;background:#000;"></div><div class="a" style="left:81px;top:252px;width:1px;height:22px;background:#000;"></div><div class="a" style="left:194px;top:252px;width:1px;height:22px;background:#000;"></div><div class="a" style="left:294px;top:252px;width:1px;height:22px;background:#000;"></div><div class="a" style="left:394px;top:252px;width:1px;height:22px;background:#000;"></div><div class="a" style="left:494px;top:252px;width:1px;height:22px;background:#000;"></div><div class="a" style="left:594px;top:252px;width:1px;height:22px;background:#000;"></div><div class="a" style="left:813px;top:252px;width:1px;height:22px;background:#000;"></div><div class="t" style="left:86.5px;top:255px;width:106px;overflow:hidden"><span class="s d">aacraid</span></div><div class="t" style="left:199.5px;top:255px;width:93px;overflow:hidden"><span class="s d">x86_64@ofxboot</span></div><div class="t" style="left:298px;top:255px;width:93px;overflow:hidden"><span class="s d">8/9/2010 5:38:17</span></div><div class="t" style="left:399.5px;top:255px;width:93px;overflow:hidden"><span class="s d">BaseLine</span></div><div class="t" style="left:499.5px;top:255px;width:93px;overflow:hidden"><span class="s d">Unknown</span></div><div class="t" style="left:599.5px;top:255px;width:212px;overflow:hidden"><span class="s d">2.6.16.21-0.8-default</span></div><div class="a" style="left:24px;top:259px;width:9px;height:9px;background:#808080;"></div><div class="a" style="left:25px;top:260px;width:7px;height:7px;background:#fff;"></div><div class="a" style="left:26px;top:263px;width:5px;height:1px;background:#000;"></div><div class="a" style="left:28px;top:261px;width:1px;height:5px;background:#000;"></div><div class="a" style="left:34px;top:263px;width:1px;height:1px;background:#808080;"></div><div class="a" style="left:36px;top:263px;width:1px;height:1px;background:#808080;"></div><div class="a" style="left:38px;top:274px;width:43px;height:20px;background:#D4D0C8;"></div><div class="a" style="left:38px;top:274px;width:43px;height:1px;background:#fff;"></div><div class="a" style="left:38px;top:274px;width:1px;height:20px;background:#fff;"></div><div class="a" style="left:38px;top:294px;width:43px;height:1px;background:#808080;"></div><div class="t" style="left:41px;top:276px;"><span class="s">4</span></div><div class="a" style="left:82px;top:274px;width:731px;height:20px;background:#fff;"></div><div class="a" style="left:81px;top:273px;width:733px;height:1px;background:#000;"></div><div class="a" style="left:81px;top:273px;width:1px;height:22px;background:#000;"></div><div class="a" style="left:194px;top:273px;width:1px;height:22px;background:#000;"></div><div class="a" style="left:294px;top:273px;width:1px;height:22px;background:#000;"></div><div class="a" style="left:394px;top:273px;width:1px;height:22px;background:#000;"></div><div class="a" style="left:494px;top:273px;width:1px;height:22px;background:#000;"></div><div class="a" style="left:594px;top:273px;width:1px;height:22px;background:#000;"></div><div class="a" style="left:813px;top:273px;width:1px;height:22px;background:#000;"></div><div class="t" style="left:86.5px;top:276px;width:106px;overflow:hidden"><span class="s d">serverworks</span></div><div class="t" style="left:199.5px;top:276px;width:93px;overflow:hidden"><span class="s d">x86_64@ofxboot</span></div><div class="t" style="left:298px;top:276px;width:93px;overflow:hidden"><span class="s d">8/9/2010 5:38:17</span></div><div class="t" style="left:399.5px;top:276px;width:93px;overflow:hidden"><span class="s d">BaseLine</span></div><div class="t" style="left:499.5px;top:276px;width:93px;overflow:hidden"><span class="s d">Unknown</span></div><div class="t" style="left:599.5px;top:276px;width:212px;overflow:hidden"><span class="s d">2.6.16.21-0.8-default</span></div><div class="a" style="left:24px;top:280px;width:9px;height:9px;background:#808080;"></div><div class="a" style="left:25px;top:281px;width:7px;height:7px;background:#fff;"></div><div class="a" style="left:26px;top:284px;width:5px;height:1px;background:#000;"></div><div class="a" style="left:28px;top:282px;width:1px;height:5px;background:#000;"></div><div class="a" style="left:34px;top:284px;width:1px;height:1px;background:#808080;"></div><div class="a" style="left:36px;top:284px;width:1px;height:1px;background:#808080;"></div><div class="a" style="left:38px;top:295px;width:43px;height:20px;background:#D4D0C8;"></div><div class="a" style="left:38px;top:295px;width:43px;height:1px;background:#fff;"></div><div class="a" style="left:38px;top:295px;width:1px;height:20px;background:#fff;"></div><div class="a" style="left:38px;top:315px;width:43px;height:1px;background:#808080;"></div><div class="t" style="left:41px;top:297px;"><span class="s">5</span></div><div class="a" style="left:82px;top:295px;width:731px;height:20px;background:#fff;"></div><div class="a" style="left:81px;top:294px;width:733px;height:1px;background:#000;"></div><div class="a" style="left:81px;top:294px;width:1px;height:22px;background:#000;"></div><div class="a" style="left:194px;top:294px;width:1px;height:22px;background:#000;"></div><div class="a" style="left:294px;top:294px;width:1px;height:22px;background:#000;"></div><div class="a" style="left:394px;top:294px;width:1px;height:22px;background:#000;"></div><div class="a" style="left:494px;top:294px;width:1px;height:22px;background:#000;"></div><div class="a" style="left:594px;top:294px;width:1px;height:22px;background:#000;"></div><div class="a" style="left:813px;top:294px;width:1px;height:22px;background:#000;"></div><div class="t" style="left:86.5px;top:297px;width:106px;overflow:hidden"><span class="s d">sungem</span></div><div class="t" style="left:199.5px;top:297px;width:93px;overflow:hidden"><span class="s d">x86</span></div><div class="t" style="left:298px;top:297px;width:93px;overflow:hidden"><span class="s d">8/9/2010 5:38:22</span></div><div class="t" style="left:399.5px;top:297px;width:93px;overflow:hidden"><span class="s d">BaseLine</span></div><div class="t" style="left:499.5px;top:297px;width:93px;overflow:hidden"><span class="s d">Unknown</span></div><div class="t" style="left:599.5px;top:297px;width:212px;overflow:hidden"><span class="s d">2.6.9-55.EL</span></div><div class="a" style="left:24px;top:301px;width:9px;height:9px;background:#808080;"></div><div class="a" style="left:25px;top:302px;width:7px;height:7px;background:#fff;"></div><div class="a" style="left:26px;top:305px;width:5px;height:1px;background:#000;"></div><div class="a" style="left:28px;top:303px;width:1px;height:5px;background:#000;"></div><div class="a" style="left:34px;top:305px;width:1px;height:1px;background:#808080;"></div><div class="a" style="left:36px;top:305px;width:1px;height:1px;background:#808080;"></div><div class="a" style="left:38px;top:316px;width:43px;height:20px;background:#D4D0C8;"></div><div class="a" style="left:38px;top:316px;width:43px;height:1px;background:#fff;"></div><div class="a" style="left:38px;top:316px;width:1px;height:20px;background:#fff;"></div><div class="a" style="left:38px;top:336px;width:43px;height:1px;background:#808080;"></div><div class="t" style="left:41px;top:318px;"><span class="s">6</span></div><div class="a" style="left:82px;top:316px;width:731px;height:20px;background:#fff;"></div><div class="a" style="left:81px;top:315px;width:733px;height:1px;background:#000;"></div><div class="a" style="left:81px;top:315px;width:1px;height:22px;background:#000;"></div><div class="a" style="left:194px;top:315px;width:1px;height:22px;background:#000;"></div><div class="a" style="left:294px;top:315px;width:1px;height:22px;background:#000;"></div><div class="a" style="left:394px;top:315px;width:1px;height:22px;background:#000;"></div><div class="a" style="left:494px;top:315px;width:1px;height:22px;background:#000;"></div><div class="a" style="left:594px;top:315px;width:1px;height:22px;background:#000;"></div><div class="a" style="left:813px;top:315px;width:1px;height:22px;background:#000;"></div><div class="t" style="left:86.5px;top:318px;width:106px;overflow:hidden"><span class="s d">istallion</span></div><div class="t" style="left:199.5px;top:318px;width:93px;overflow:hidden"><span class="s d">x86</span></div><div class="t" style="left:298px;top:318px;width:93px;overflow:hidden"><span class="s d">8/9/2010 5:38:25</span></div><div class="t" style="left:399.5px;top:318px;width:93px;overflow:hidden"><span class="s d">BaseLine</span></div><div class="t" style="left:499.5px;top:318px;width:93px;overflow:hidden"><span class="s d">Unknown</span></div><div class="t" style="left:599.5px;top:318px;width:212px;overflow:hidden"><span class="s d">2.4.19-4GB</span></div><div class="a" style="left:24px;top:322px;width:9px;height:9px;background:#808080;"></div><div class="a" style="left:25px;top:323px;width:7px;height:7px;background:#fff;"></div><div class="a" style="left:26px;top:326px;width:5px;height:1px;background:#000;"></div><div class="a" style="left:28px;top:324px;width:1px;height:5px;background:#000;"></div><div class="a" style="left:34px;top:326px;width:1px;height:1px;background:#808080;"></div><div class="a" style="left:36px;top:326px;width:1px;height:1px;background:#808080;"></div><div class="a" style="left:38px;top:337px;width:43px;height:20px;background:#D4D0C8;"></div><div class="a" style="left:38px;top:337px;width:43px;height:1px;background:#fff;"></div><div class="a" style="left:38px;top:337px;width:1px;height:20px;background:#fff;"></div><div class="a" style="left:38px;top:357px;width:43px;height:1px;background:#808080;"></div><div class="t" style="left:41px;top:339px;"><span class="s">7</span></div><div class="a" style="left:82px;top:337px;width:731px;height:20px;background:#fff;"></div><div class="a" style="left:81px;top:336px;width:733px;height:1px;background:#000;"></div><div class="a" style="left:81px;top:336px;width:1px;height:22px;background:#000;"></div><div class="a" style="left:194px;top:336px;width:1px;height:22px;background:#000;"></div><div class="a" style="left:294px;top:336px;width:1px;height:22px;background:#000;"></div><div class="a" style="left:394px;top:336px;width:1px;height:22px;background:#000;"></div><div class="a" style="left:494px;top:336px;width:1px;height:22px;background:#000;"></div><div class="a" style="left:594px;top:336px;width:1px;height:22px;background:#000;"></div><div class="a" style="left:813px;top:336px;width:1px;height:22px;background:#000;"></div><div class="t" style="left:86.5px;top:339px;width:106px;overflow:hidden"><span class="s d">e752x_edac</span></div><div class="t" style="left:199.5px;top:339px;width:93px;overflow:hidden"><span class="s d">x86</span></div><div class="t" style="left:298px;top:339px;width:93px;overflow:hidden"><span class="s d">8/9/2010 5:38:21</span></div><div class="t" style="left:399.5px;top:339px;width:93px;overflow:hidden"><span class="s d">BaseLine</span></div><div class="t" style="left:499.5px;top:339px;width:93px;overflow:hidden"><span class="s d">Unknown</span></div><div class="t" style="left:599.5px;top:339px;width:212px;overflow:hidden"><span class="s d">2.6.9-42.ELsmp</span></div><div class="a" style="left:24px;top:343px;width:9px;height:9px;background:#808080;"></div><div class="a" style="left:25px;top:344px;width:7px;height:7px;background:#fff;"></div><div class="a" style="left:26px;top:347px;width:5px;height:1px;background:#000;"></div><div class="a" style="left:28px;top:345px;width:1px;height:5px;background:#000;"></div><div class="a" style="left:34px;top:347px;width:1px;height:1px;background:#808080;"></div><div class="a" style="left:36px;top:347px;width:1px;height:1px;background:#808080;"></div><div class="a" style="left:38px;top:358px;width:43px;height:20px;background:#D4D0C8;"></div><div class="a" style="left:38px;top:358px;width:43px;height:1px;background:#fff;"></div><div class="a" style="left:38px;top:358px;width:1px;height:20px;background:#fff;"></div><div class="a" style="left:38px;top:378px;width:43px;height:1px;background:#808080;"></div><div class="t" style="left:41px;top:360px;"><span class="s">8</span></div><div class="a" style="left:82px;top:358px;width:731px;height:20px;background:#fff;"></div><div class="a" style="left:81px;top:357px;width:733px;height:1px;background:#000;"></div><div class="a" style="left:81px;top:357px;width:1px;height:22px;background:#000;"></div><div class="a" style="left:194px;top:357px;width:1px;height:22px;background:#000;"></div><div class="a" style="left:294px;top:357px;width:1px;height:22px;background:#000;"></div><div class="a" style="left:394px;top:357px;width:1px;height:22px;background:#000;"></div><div class="a" style="left:494px;top:357px;width:1px;height:22px;background:#000;"></div><div class="a" style="left:594px;top:357px;width:1px;height:22px;background:#000;"></div><div class="a" style="left:813px;top:357px;width:1px;height:22px;background:#000;"></div><div class="t" style="left:86.5px;top:360px;width:106px;overflow:hidden"><span class="s d">mptfc</span></div><div class="t" style="left:199.5px;top:360px;width:93px;overflow:hidden"><span class="s d">x86@VMwareES</span></div><div class="t" style="left:298px;top:360px;width:93px;overflow:hidden"><span class="s d">8/9/2010 5:39:42</span></div><div class="t" style="left:399.5px;top:360px;width:93px;overflow:hidden"><span class="s d">BaseLine</span></div><div class="t" style="left:499.5px;top:360px;width:93px;overflow:hidden"><span class="s d">Unknown</span></div><div class="t" style="left:599.5px;top:360px;width:212px;overflow:hidden"><span class="s d">2.6.5-7.244-default</span></div><div class="a" style="left:24px;top:364px;width:9px;height:9px;background:#808080;"></div><div class="a" style="left:25px;top:365px;width:7px;height:7px;background:#fff;"></div><div class="a" style="left:26px;top:368px;width:5px;height:1px;background:#000;"></div><div class="a" style="left:28px;top:366px;width:1px;height:5px;background:#000;"></div><div class="a" style="left:34px;top:368px;width:1px;height:1px;background:#808080;"></div><div class="a" style="left:36px;top:368px;width:1px;height:1px;background:#808080;"></div><div class="a" style="left:38px;top:379px;width:43px;height:20px;background:#D4D0C8;"></div><div class="a" style="left:38px;top:379px;width:43px;height:1px;background:#fff;"></div><div class="a" style="left:38px;top:379px;width:1px;height:20px;background:#fff;"></div><div class="a" style="left:38px;top:399px;width:43px;height:1px;background:#808080;"></div><div class="t" style="left:41px;top:381px;"><span class="s">9</span></div><div class="a" style="left:82px;top:379px;width:731px;height:20px;background:#fff;"></div><div class="a" style="left:81px;top:378px;width:733px;height:1px;background:#000;"></div><div class="a" style="left:81px;top:378px;width:1px;height:22px;background:#000;"></div><div class="a" style="left:194px;top:378px;width:1px;height:22px;background:#000;"></div><div class="a" style="left:294px;top:378px;width:1px;height:22px;background:#000;"></div><div class="a" style="left:394px;top:378px;width:1px;height:22px;background:#000;"></div><div class="a" style="left:494px;top:378px;width:1px;height:22px;background:#000;"></div><div class="a" style="left:594px;top:378px;width:1px;height:22px;background:#000;"></div><div class="a" style="left:813px;top:378px;width:1px;height:22px;background:#000;"></div><div class="t" style="left:86.5px;top:381px;width:106px;overflow:hidden"><span class="s d">gdth</span></div><div class="t" style="left:199.5px;top:381px;width:93px;overflow:hidden"><span class="s d">x86</span></div><div class="t" style="left:298px;top:381px;width:93px;overflow:hidden"><span class="s d">8/9/2010 5:38:22</span></div><div class="t" style="left:399.5px;top:381px;width:93px;overflow:hidden"><span class="s d">BaseLine</span></div><div class="t" style="left:499.5px;top:381px;width:93px;overflow:hidden"><span class="s d">Unknown</span></div><div class="t" style="left:599.5px;top:381px;width:212px;overflow:hidden"><span class="s d">2.6.9-55.EL</span></div><div class="a" style="left:24px;top:385px;width:9px;height:9px;background:#808080;"></div><div class="a" style="left:25px;top:386px;width:7px;height:7px;background:#fff;"></div><div class="a" style="left:26px;top:389px;width:5px;height:1px;background:#000;"></div><div class="a" style="left:28px;top:387px;width:1px;height:5px;background:#000;"></div><div class="a" style="left:34px;top:389px;width:1px;height:1px;background:#808080;"></div><div class="a" style="left:36px;top:389px;width:1px;height:1px;background:#808080;"></div><div class="a" style="left:38px;top:400px;width:43px;height:20px;background:#D4D0C8;"></div><div class="a" style="left:38px;top:400px;width:43px;height:1px;background:#fff;"></div><div class="a" style="left:38px;top:400px;width:1px;height:20px;background:#fff;"></div><div class="a" style="left:38px;top:420px;width:43px;height:1px;background:#808080;"></div><div class="t" style="left:41px;top:402px;"><span class="s">10</span></div><div class="a" style="left:82px;top:400px;width:731px;height:20px;background:#fff;"></div><div class="a" style="left:81px;top:399px;width:733px;height:1px;background:#000;"></div><div class="a" style="left:81px;top:399px;width:1px;height:22px;background:#000;"></div><div class="a" style="left:194px;top:399px;width:1px;height:22px;background:#000;"></div><div class="a" style="left:294px;top:399px;width:1px;height:22px;background:#000;"></div><div class="a" style="left:394px;top:399px;width:1px;height:22px;background:#000;"></div><div class="a" style="left:494px;top:399px;width:1px;height:22px;background:#000;"></div><div class="a" style="left:594px;top:399px;width:1px;height:22px;background:#000;"></div><div class="a" style="left:813px;top:399px;width:1px;height:22px;background:#000;"></div><div class="t" style="left:86.5px;top:402px;width:106px;overflow:hidden"><span class="s d">zr36067</span></div><div class="t" style="left:199.5px;top:402px;width:93px;overflow:hidden"><span class="s d">x86</span></div><div class="t" style="left:298px;top:402px;width:93px;overflow:hidden"><span class="s d">8/9/2010 5:38:25</span></div><div class="t" style="left:399.5px;top:402px;width:93px;overflow:hidden"><span class="s d">BaseLine</span></div><div class="t" style="left:499.5px;top:402px;width:93px;overflow:hidden"><span class="s d">Unknown</span></div><div class="t" style="left:599.5px;top:402px;width:212px;overflow:hidden"><span class="s d">2.4.19-4GB</span></div><div class="a" style="left:24px;top:406px;width:9px;height:9px;background:#808080;"></div><div class="a" style="left:25px;top:407px;width:7px;height:7px;background:#fff;"></div><div class="a" style="left:26px;top:410px;width:5px;height:1px;background:#000;"></div><div class="a" style="left:28px;top:408px;width:1px;height:5px;background:#000;"></div><div class="a" style="left:34px;top:410px;width:1px;height:1px;background:#808080;"></div><div class="a" style="left:36px;top:410px;width:1px;height:1px;background:#808080;"></div><div class="a" style="left:38px;top:421px;width:43px;height:20px;background:#D4D0C8;"></div><div class="a" style="left:38px;top:421px;width:43px;height:1px;background:#fff;"></div><div class="a" style="left:38px;top:421px;width:1px;height:20px;background:#fff;"></div><div class="a" style="left:38px;top:441px;width:43px;height:1px;background:#808080;"></div><div class="t" style="left:41px;top:423px;"><span class="s">11</span></div><div class="a" style="left:82px;top:421px;width:731px;height:20px;background:#fff;"></div><div class="a" style="left:81px;top:420px;width:733px;height:1px;background:#000;"></div><div class="a" style="left:81px;top:420px;width:1px;height:22px;background:#000;"></div><div class="a" style="left:194px;top:420px;width:1px;height:22px;background:#000;"></div><div class="a" style="left:294px;top:420px;width:1px;height:22px;background:#000;"></div><div class="a" style="left:394px;top:420px;width:1px;height:22px;background:#000;"></div><div class="a" style="left:494px;top:420px;width:1px;height:22px;background:#000;"></div><div class="a" style="left:594px;top:420px;width:1px;height:22px;background:#000;"></div><div class="a" style="left:813px;top:420px;width:1px;height:22px;background:#000;"></div><div class="t" style="left:86.5px;top:423px;width:106px;overflow:hidden"><span class="s d">snd-ens1371</span></div><div class="t" style="left:199.5px;top:423px;width:93px;overflow:hidden"><span class="s d">x86</span></div><div class="t" style="left:298px;top:423px;width:93px;overflow:hidden"><span class="s d">8/9/2010 5:38:24</span></div><div class="t" style="left:399.5px;top:423px;width:93px;overflow:hidden"><span class="s d">BaseLine</span></div><div class="t" style="left:499.5px;top:423px;width:93px;overflow:hidden"><span class="s d">Unknown</span></div><div class="t" style="left:599.5px;top:423px;width:212px;overflow:hidden"><span class="s d">2.6.18-8.el5</span></div><div class="a" style="left:24px;top:427px;width:9px;height:9px;background:#808080;"></div><div class="a" style="left:25px;top:428px;width:7px;height:7px;background:#fff;"></div><div class="a" style="left:26px;top:431px;width:5px;height:1px;background:#000;"></div><div class="a" style="left:28px;top:429px;width:1px;height:5px;background:#000;"></div><div class="a" style="left:34px;top:431px;width:1px;height:1px;background:#808080;"></div><div class="a" style="left:36px;top:431px;width:1px;height:1px;background:#808080;"></div><div class="a" style="left:38px;top:442px;width:43px;height:20px;background:#D4D0C8;"></div><div class="a" style="left:38px;top:442px;width:43px;height:1px;background:#fff;"></div><div class="a" style="left:38px;top:442px;width:1px;height:20px;background:#fff;"></div><div class="a" style="left:38px;top:462px;width:43px;height:1px;background:#808080;"></div><div class="t" style="left:41px;top:444px;"><span class="s">12</span></div><div class="a" style="left:82px;top:442px;width:731px;height:20px;background:#fff;"></div><div class="a" style="left:81px;top:441px;width:733px;height:1px;background:#000;"></div><div class="a" style="left:81px;top:441px;width:1px;height:22px;background:#000;"></div><div class="a" style="left:194px;top:441px;width:1px;height:22px;background:#000;"></div><div class="a" style="left:294px;top:441px;width:1px;height:22px;background:#000;"></div><div class="a" style="left:394px;top:441px;width:1px;height:22px;background:#000;"></div><div class="a" style="left:494px;top:441px;width:1px;height:22px;background:#000;"></div><div class="a" style="left:594px;top:441px;width:1px;height:22px;background:#000;"></div><div class="a" style="left:813px;top:441px;width:1px;height:22px;background:#000;"></div><div class="t" style="left:86.5px;top:444px;width:106px;overflow:hidden"><span class="s d">mptfc</span></div><div class="t" style="left:199.5px;top:444px;width:93px;overflow:hidden"><span class="s d">x86_64@VMware</span></div><div class="t" style="left:298px;top:444px;width:93px;overflow:hidden"><span class="s d">8/9/2010 5:39:37</span></div><div class="t" style="left:399.5px;top:444px;width:93px;overflow:hidden"><span class="s d">BaseLine</span></div><div class="t" style="left:499.5px;top:444px;width:93px;overflow:hidden"><span class="s d">Unknown</span></div><div class="t" style="left:599.5px;top:444px;width:212px;overflow:hidden"><span class="s d">2.6.9-42.ELsmp</span></div><div class="a" style="left:24px;top:448px;width:9px;height:9px;background:#808080;"></div><div class="a" style="left:25px;top:449px;width:7px;height:7px;background:#fff;"></div><div class="a" style="left:26px;top:452px;width:5px;height:1px;background:#000;"></div><div class="a" style="left:28px;top:450px;width:1px;height:5px;background:#000;"></div><div class="a" style="left:34px;top:452px;width:1px;height:1px;background:#808080;"></div><div class="a" style="left:36px;top:452px;width:1px;height:1px;background:#808080;"></div><div class="a" style="left:38px;top:463px;width:43px;height:20px;background:#D4D0C8;"></div><div class="a" style="left:38px;top:463px;width:43px;height:1px;background:#fff;"></div><div class="a" style="left:38px;top:463px;width:1px;height:20px;background:#fff;"></div><div class="a" style="left:38px;top:483px;width:43px;height:1px;background:#808080;"></div><div class="t" style="left:41px;top:465px;"><span class="s">13</span></div><div class="a" style="left:82px;top:463px;width:731px;height:20px;background:#fff;"></div><div class="a" style="left:81px;top:462px;width:733px;height:1px;background:#000;"></div><div class="a" style="left:81px;top:462px;width:1px;height:22px;background:#000;"></div><div class="a" style="left:194px;top:462px;width:1px;height:22px;background:#000;"></div><div class="a" style="left:294px;top:462px;width:1px;height:22px;background:#000;"></div><div class="a" style="left:394px;top:462px;width:1px;height:22px;background:#000;"></div><div class="a" style="left:494px;top:462px;width:1px;height:22px;background:#000;"></div><div class="a" style="left:594px;top:462px;width:1px;height:22px;background:#000;"></div><div class="a" style="left:813px;top:462px;width:1px;height:22px;background:#000;"></div><div class="t" style="left:86.5px;top:465px;width:106px;overflow:hidden"><span class="s d">mptsas</span></div><div class="t" style="left:199.5px;top:465px;width:93px;overflow:hidden"><span class="s d">x86_64@VMware</span></div><div class="t" style="left:298px;top:465px;width:93px;overflow:hidden"><span class="s d">8/9/2010 5:39:36</span></div><div class="t" style="left:399.5px;top:465px;width:93px;overflow:hidden"><span class="s d">BaseLine</span></div><div class="t" style="left:499.5px;top:465px;width:93px;overflow:hidden"><span class="s d">Unknown</span></div><div class="t" style="left:599.5px;top:465px;width:212px;overflow:hidden"><span class="s d">2.6.9-34.ELlargesmp</span></div><div class="a" style="left:24px;top:469px;width:9px;height:9px;background:#808080;"></div><div class="a" style="left:25px;top:470px;width:7px;height:7px;background:#fff;"></div><div class="a" style="left:26px;top:473px;width:5px;height:1px;background:#000;"></div><div class="a" style="left:28px;top:471px;width:1px;height:5px;background:#000;"></div><div class="a" style="left:34px;top:473px;width:1px;height:1px;background:#808080;"></div><div class="a" style="left:36px;top:473px;width:1px;height:1px;background:#808080;"></div></div><div class="a" style="left:814px;top:148px;width:16px;height:329px;background:repeating-conic-gradient(#fff 0 25%, #D4D0C8 0 50%) 0 0/2px 2px;"></div><div class="a" style="left:814px;top:148px;width:16px;height:16px;background:#D4D0C8;"></div><div class="a" style="left:815px;top:149px;width:13px;height:1px;background:#fff;"></div><div class="a" style="left:815px;top:149px;width:1px;height:13px;background:#fff;"></div><div class="a" style="left:814px;top:163px;width:16px;height:1px;background:#404040;"></div><div class="a" style="left:829px;top:148px;width:1px;height:16px;background:#404040;"></div><div class="a" style="left:815px;top:162px;width:14px;height:1px;background:#808080;"></div><div class="a" style="left:828px;top:149px;width:1px;height:14px;background:#808080;"></div><svg class="a" style="left:819px;top:154px" width="7" height="4" shape-rendering="crispEdges"><path d="M3,0 h1 v1 h1 v1 h1 v1 h1 v1 h-7 v-1 h1 v-1 h1 v-1 h1 z" fill="#000"/></svg><div class="a" style="left:814px;top:164px;width:16px;height:8px;background:#D4D0C8;"></div><div class="a" style="left:815px;top:165px;width:13px;height:1px;background:#fff;"></div><div class="a" style="left:815px;top:165px;width:1px;height:5px;background:#fff;"></div><div class="a" style="left:814px;top:171px;width:16px;height:1px;background:#404040;"></div><div class="a" style="left:829px;top:164px;width:1px;height:8px;background:#404040;"></div><div class="a" style="left:815px;top:170px;width:14px;height:1px;background:#808080;"></div><div class="a" style="left:828px;top:165px;width:1px;height:6px;background:#808080;"></div><div class="a" style="left:814px;top:461px;width:16px;height:16px;background:#D4D0C8;"></div><div class="a" style="left:815px;top:462px;width:13px;height:1px;background:#fff;"></div><div class="a" style="left:815px;top:462px;width:1px;height:13px;background:#fff;"></div><div class="a" style="left:814px;top:476px;width:16px;height:1px;background:#404040;"></div><div class="a" style="left:829px;top:461px;width:1px;height:16px;background:#404040;"></div><div class="a" style="left:815px;top:475px;width:14px;height:1px;background:#808080;"></div><div class="a" style="left:828px;top:462px;width:1px;height:14px;background:#808080;"></div><svg class="a" style="left:819px;top:467px" width="7" height="4" shape-rendering="crispEdges"><path d="M0,0 h7 v1 h-1 v1 h-1 v1 h-1 v1 h-1 v-1 h-1 v-1 h-1 v-1 h-1 z" fill="#000"/></svg><div class="a" style="left:9px;top:492px;width:75px;height:23px;background:#D4D0C8;"></div><div class="a" style="left:9px;top:492px;width:74px;height:1px;background:#fff;"></div><div class="a" style="left:9px;top:492px;width:1px;height:22px;background:#fff;"></div><div class="a" style="left:9px;top:514px;width:75px;height:1px;background:#404040;"></div><div class="a" style="left:83px;top:492px;width:1px;height:23px;background:#404040;"></div><div class="a" style="left:10px;top:513px;width:73px;height:1px;background:#808080;"></div><div class="a" style="left:82px;top:493px;width:1px;height:21px;background:#808080;"></div><div class="t" style="left:9px;top:498px;width:74px;text-align:center;"><span class="s c"><u>H</u>elp</span></div><div class="a" style="left:500px;top:492px;width:125px;height:24px;background:#D4D0C8;"></div><div class="a" style="left:500px;top:492px;width:124px;height:1px;background:#fff;"></div><div class="a" style="left:500px;top:492px;width:1px;height:23px;background:#fff;"></div><div class="a" style="left:500px;top:515px;width:125px;height:1px;background:#404040;"></div><div class="a" style="left:624px;top:492px;width:1px;height:24px;background:#404040;"></div><div class="a" style="left:501px;top:514px;width:123px;height:1px;background:#808080;"></div><div class="a" style="left:623px;top:493px;width:1px;height:22px;background:#808080;"></div><svg class="a" style="left:503px;top:495px" width="18" height="17"><path d="M4,4 L14,13 M14,4 L4,13" stroke="#c8c6c0" stroke-width="5" stroke-linecap="round" transform="translate(0.8,0.8)"/><path d="M4,4 L14,13 M14,4 L4,13" stroke="#8a8a8a" stroke-width="4.6" stroke-linecap="round"/><path d="M4,4 L14,13 M14,4 L4,13" stroke="#b6b6b6" stroke-width="2.8" stroke-linecap="round"/></svg><div class="t" style="left:530px;top:498px;color:#8c8c8c"><span class="s">Delete Drivers...</span></div><div class="a" style="left:633px;top:492px;width:125px;height:24px;background:#D4D0C8;"></div><div class="a" style="left:633px;top:492px;width:124px;height:1px;background:#fff;"></div><div class="a" style="left:633px;top:492px;width:1px;height:23px;background:#fff;"></div><div class="a" style="left:633px;top:515px;width:125px;height:1px;background:#404040;"></div><div class="a" style="left:757px;top:492px;width:1px;height:24px;background:#404040;"></div><div class="a" style="left:634px;top:514px;width:123px;height:1px;background:#808080;"></div><div class="a" style="left:756px;top:493px;width:1px;height:22px;background:#808080;"></div><svg class="a" style="left:638px;top:496px" width="16" height="16"><defs><linearGradient id="ag" x1="0" x2="1" y1="0" y2="0"><stop offset="0" stop-color="#1f6fd8"/><stop offset="0.45" stop-color="#6aaef5"/><stop offset="1" stop-color="#1a5fc8"/></linearGradient></defs><path d="M7.5,2 L13.8,8 L10.5,8 L10.5,14 L4.5,14 L4.5,8 L1.2,8 Z" fill="#8a8680" opacity="0.6"/><path d="M6.8,1 L13,7.2 L9.8,7.2 L9.8,13 L3.8,13 L3.8,7.2 L0.6,7.2 Z" fill="url(#ag)" stroke="#1450b0" stroke-width="0.9" stroke-linejoin="round"/></svg><div class="t" style="left:661px;top:498px;"><span class="s">Upload Drivers...</span></div><div class="a" style="left:766px;top:492px;width:75px;height:24px;background:#D4D0C8;"></div><div class="a" style="left:766px;top:492px;width:74px;height:1px;background:#fff;"></div><div class="a" style="left:766px;top:492px;width:1px;height:23px;background:#fff;"></div><div class="a" style="left:766px;top:515px;width:75px;height:1px;background:#404040;"></div><div class="a" style="left:840px;top:492px;width:1px;height:24px;background:#404040;"></div><div class="a" style="left:767px;top:514px;width:73px;height:1px;background:#808080;"></div><div class="a" style="left:839px;top:493px;width:1px;height:22px;background:#808080;"></div><div class="t" style="left:766px;top:498px;width:74px;text-align:center;"><span class="s c">Close</span></div><svg class="a" style="left:0;top:0" width="851" height="532" shape-rendering="crispEdges"><rect x="846" y="513" width="1" height="1" fill="#fff"/><rect x="845" y="514" width="1" height="1" fill="#fff"/><rect x="846" y="514" width="1" height="1" fill="#555"/><rect x="844" y="515" width="1" height="1" fill="#fff"/><rect x="845" y="515" width="1" height="1" fill="#555"/><rect x="846" y="515" width="1" height="1" fill="#555"/><rect x="843" y="516" width="1" height="1" fill="#fff"/><rect x="844" y="516" width="1" height="1" fill="#555"/><rect x="845" y="516" width="1" height="1" fill="#555"/><rect x="842" y="517" width="1" height="1" fill="#fff"/><rect x="843" y="517" width="1" height="1" fill="#555"/><rect x="844" y="517" width="1" height="1" fill="#555"/><rect x="841" y="518" width="1" height="1" fill="#fff"/><rect x="842" y="518" width="1" height="1" fill="#555"/><rect x="843" y="518" width="1" height="1" fill="#555"/><rect x="840" y="519" width="1" height="1" fill="#fff"/><rect x="841" y="519" width="1" height="1" fill="#555"/><rect x="842" y="519" width="1" height="1" fill="#555"/><rect x="839" y="520" width="1" height="1" fill="#fff"/><rect x="840" y="520" width="1" height="1" fill="#555"/><rect x="841" y="520" width="1" height="1" fill="#555"/><rect x="838" y="521" width="1" height="1" fill="#fff"/><rect x="839" y="521" width="1" height="1" fill="#555"/><rect x="840" y="521" width="1" height="1" fill="#555"/><rect x="837" y="522" width="1" height="1" fill="#fff"/><rect x="838" y="522" width="1" height="1" fill="#555"/><rect x="839" y="522" width="1" height="1" fill="#555"/><rect x="836" y="523" width="1" height="1" fill="#fff"/><rect x="837" y="523" width="1" height="1" fill="#555"/><rect x="838" y="523" width="1" height="1" fill="#555"/><rect x="835" y="524" width="1" height="1" fill="#fff"/><rect x="836" y="524" width="1" height="1" fill="#555"/><rect x="837" y="524" width="1" height="1" fill="#555"/><rect x="834" y="525" width="1" height="1" fill="#fff"/><rect x="835" y="525" width="1" height="1" fill="#555"/><rect x="836" y="525" width="1" height="1" fill="#555"/><rect x="833" y="526" width="1" height="1" fill="#fff"/><rect x="834" y="526" width="1" height="1" fill="#555"/><rect x="835" y="526" width="1" height="1" fill="#555"/><rect x="846" y="517" width="1" height="1" fill="#fff"/><rect x="845" y="518" width="1" height="1" fill="#fff"/><rect x="846" y="518" width="1" height="1" fill="#555"/><rect x="844" y="519" width="1" height="1" fill="#fff"/><rect x="845" y="519" width="1" height="1" fill="#555"/><rect x="846" y="519" width="1" height="1" fill="#555"/><rect x="843" y="520" width="1" height="1" fill="#fff"/><rect x="844" y="520" width="1" height="1" fill="#555"/><rect x="845" y="520" width="1" height="1" fill="#555"/><rect x="842" y="521" width="1" height="1" fill="#fff"/><rect x="843" y="521" width="1" height="1" fill="#555"/><rect x="844" y="521" width="1" height="1" fill="#555"/><rect x="841" y="522" width="1" height="1" fill="#fff"/><rect x="842" y="522" width="1" height="1" fill="#555"/><rect x="843" y="522" width="1" height="1" fill="#555"/><rect x="840" y="523" width="1" height="1" fill="#fff"/><rect x="841" y="523" width="1" height="1" fill="#555"/><rect x="842" y="523" width="1" height="1" fill="#555"/><rect x="839" y="524" width="1" height="1" fill="#fff"/><rect x="840" y="524" width="1" height="1" fill="#555"/><rect x="841" y="524" width="1" height="1" fill="#555"/><rect x="838" y="525" width="1" height="1" fill="#fff"/><rect x="839" y="525" width="1" height="1" fill="#555"/><rect x="840" y="525" width="1" height="1" fill="#555"/><rect x="837" y="526" width="1" height="1" fill="#fff"/><rect x="838" y="526" width="1" height="1" fill="#555"/><rect x="839" y="526" width="1" height="1" fill="#555"/><rect x="846" y="521" width="1" height="1" fill="#fff"/><rect x="845" y="522" width="1" height="1" fill="#fff"/><rect x="846" y="522" width="1" height="1" fill="#555"/><rect x="844" y="523" width="1" height="1" fill="#fff"/><rect x="845" y="523" width="1" height="1" fill="#555"/><rect x="846" y="523" width="1" height="1" fill="#555"/><rect x="843" y="524" width="1" height="1" fill="#fff"/><rect x="844" y="524" width="1" height="1" fill="#555"/><rect x="845" y="524" width="1" height="1" fill="#555"/><rect x="842" y="525" width="1" height="1" fill="#fff"/><rect x="843" y="525" width="1" height="1" fill="#555"/><rect x="844" y="525" width="1" height="1" fill="#555"/><rect x="841" y="526" width="1" height="1" fill="#fff"/><rect x="842" y="526" width="1" height="1" fill="#555"/><rect x="843" y="526" width="1" height="1" fill="#555"/></svg>
</body></html>
